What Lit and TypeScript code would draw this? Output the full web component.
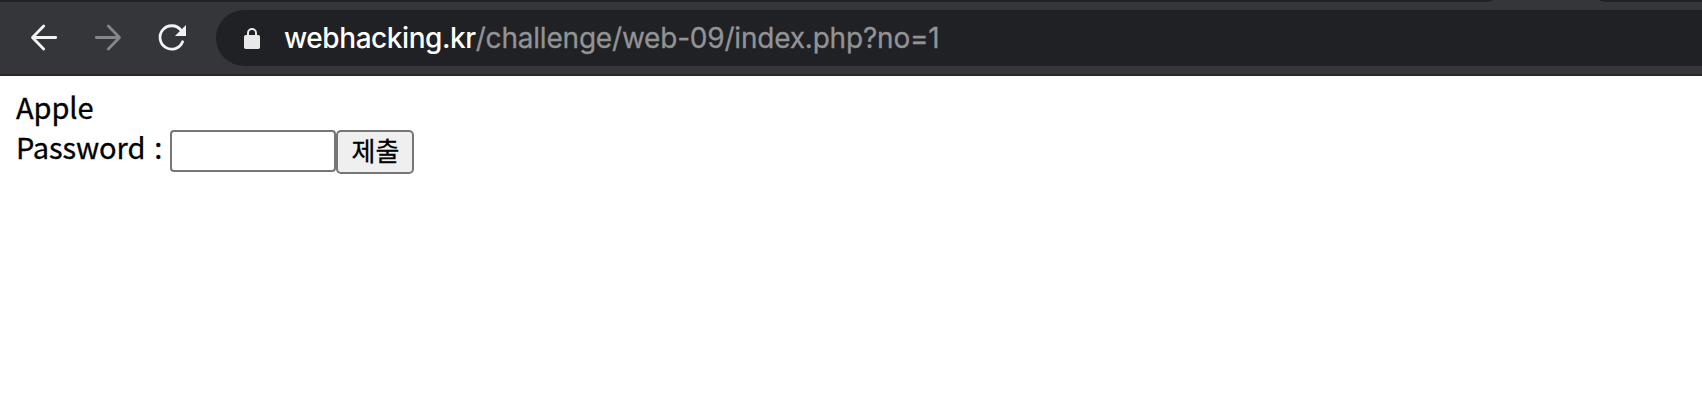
import { LitElement, html, css } from "lit";
import { customElement } from "lit/decorators.js";

@customElement("browser-toolbar")
class BrowserToolbar extends LitElement {
  static styles = css`
    :host { display: block; }
    .tabs { height: 2px; background: #202124; display: flex; }
    .tabs svg { margin-left: 1484px; display: block; }
    .bar {
      box-sizing: border-box; height: 74px; padding-top: 8px;
      background: #35363a; border-bottom: 2px solid #29272b; display: flex;
    }
    .nav { width: 216px; height: 56px; flex: none; display: block; }
    .omnibox {
      flex: 1; height: 56px; box-sizing: border-box; background: #202124;
      border-radius: 28px 0 0 28px; display: flex; padding-left: 28px;
    }
    .lock { width: 16px; height: 56px; flex: none; display: block; }
    .url {
      margin-left: 24px; font: 400 28px/56px Inter, "Liberation Sans", sans-serif;
      color: #929395; white-space: nowrap; letter-spacing: -0.2px;
      -webkit-text-stroke: 0.3px currentColor;
    }
    .host { color: #fff; font-weight: 500; letter-spacing: -0.43px; -webkit-text-stroke: 0; }
  `;
  render() {
    return html`
      <div class="tabs">
        <svg width="124" height="2" viewBox="0 0 124 2"><path d="M9 0H115Q118 2 124 2H0Q6 2 9 0Z" fill="#35363a"/></svg>
      </div>
      <div class="bar">
        <svg class="nav" viewBox="0 10 216 56" fill="none" stroke-width="2.8" stroke-linecap="round" stroke-linejoin="round">
          <path d="M55.7 37.5H32.7M43.7 26L32.5 37.5L43.7 49" stroke="#f1f3f4"/>
          <path d="M96.3 37.5H119.3M108.3 26L119.5 37.5L108.3 49" stroke="#85868a"/>
          <path d="M182.6 41.8A11.7 11.7 0 1 1 180.9 30.2" stroke="#f1f3f4"/>
          <path d="M186 25V36H175Z" fill="#f1f3f4"/>
        </svg>
        <div class="omnibox">
          <svg class="lock" viewBox="244 10 16 56">
            <rect x="244" y="35" width="16" height="14" rx="1.8" fill="#e8e8e9"/>
            <path d="M248 35.5V33a4 4 0 0 1 8 0V35.5" fill="none" stroke="#e8e8e9" stroke-width="2"/>
          </svg>
          <div class="url"><span class="host">webhacking.kr</span>/challenge/web-09/index.php?no=1</div>
        </div>
      </div>`;
  }
}

@customElement("app-root")
class AppRoot extends LitElement {
  static styles = css`
    :host { display: block; height: 400px; background: #fff; overflow: hidden; }
    .page {
      padding: 10px 16px; color: #000;
      font: 400 29px/40px "Noto Sans CJK KR", sans-serif;
      letter-spacing: -0.1px; -webkit-text-stroke: 0.3px #000;
    }
    .line { height: 40px; }
    .form { display: flex; height: 44px; margin-top: 4px; }
    .label { width: 154px; margin-top: -4px; white-space: pre; word-spacing: 2.5px; }
    .field {
      box-sizing: border-box; width: 166px; height: 42px; margin: 0; padding: 0 4px;
      border: 2px solid #767676; border-radius: 4px; background: #fff; outline: none;
    }
    .submit {
      box-sizing: border-box; width: 78px; height: 44px; margin: 0; padding: 0 0 4px 1px;
      border: 2px solid #767676; border-radius: 5px; background: #efefef; color: #000;
      font: 400 26px/36px "Noto Sans CJK KR", sans-serif; -webkit-text-stroke: 0.3px #000;
    }
  `;
  render() {
    return html`
      <browser-toolbar></browser-toolbar>
      <div class="page">
        <div class="line">Apple</div>
        <form class="form" @submit=${(e: Event) => e.preventDefault()}>
          <div class="label">Password : </div>
          <input class="field" type="text" aria-label="Password" />
          <button class="submit">제출</button>
        </form>
      </div>`;
  }
}
